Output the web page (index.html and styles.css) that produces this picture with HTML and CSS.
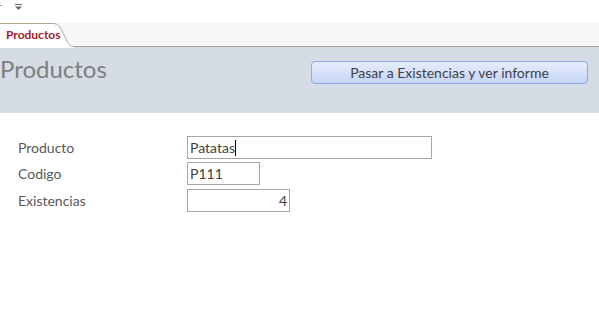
FILE: index.html
```html
<!DOCTYPE html>
<html lang="es">
<head>
    <meta charset="UTF-8">
    <title>Productos</title>
    <link rel="stylesheet" href="styles.css">
</head>
<body>
    <div class="toolbar">
        <span class="qa-mark"></span>
        <svg class="qa-menu" width="7" height="6" viewBox="0 0 7 6">
            <rect x="0" y="0" width="7" height="1" fill="#6b6b6b"/>
            <path d="M0 2.5 H7 L3.5 6 Z" fill="#6b6b6b"/>
        </svg>
    </div>

    <div class="tab-strip">
        <div class="tab">
            <svg class="tab-shape" width="74" height="25" viewBox="0 0 74 25">
                <path d="M0 0.5 H54 Q58 0.5 60 4 L68 20 Q70 23.5 74 23.5 V25 H0 Z" fill="white"/>
                <path d="M0 0.5 H54 Q58 0.5 60 4 L68 20 Q70 23.5 74 23.5" fill="none" stroke="#b3a78f" stroke-width="1"/>
            </svg>
            <span class="tab-label">Productos</span>
        </div>
    </div>

    <div class="form-header">
        <h1 class="form-title">Productos</h1>
        <button type="button" class="btn">Pasar a Existencias y ver informe</button>
    </div>

    <div class="form-detail">
        <div class="row">
            <label class="field-label">Producto</label>
            <div class="field field-wide">Patatas<span class="caret"></span></div>
        </div>
        <div class="row">
            <label class="field-label">Codigo</label>
            <div class="field field-short">P111</div>
        </div>
        <div class="row">
            <label class="field-label">Existencias</label>
            <div class="field field-num">4</div>
        </div>
    </div>
</body>
</html>
```

FILE: styles.css
```css
* {
    margin: 0;
    padding: 0;
    box-sizing: border-box;
}

body {
    font-family: Lato, "Open Sans", sans-serif;
    background-color: white;
    width: 599px;
    height: 329px;
    overflow: hidden;
}

.toolbar {
    height: 23px;
    position: relative;
}

.qa-mark {
    position: absolute;
    left: 0;
    top: 5px;
    width: 2px;
    height: 1px;
    background-color: #9a9a9a;
}

.qa-menu {
    position: absolute;
    left: 15px;
    top: 4px;
}

.tab-strip {
    height: 24px;
    background-color: #f7f7f7;
    border-bottom: 1px solid #a0a0a0;
    display: flex;
    align-items: flex-end;
}

.tab {
    position: relative;
    height: 24px;
    width: 74px;
    margin-bottom: -1px;
}

.tab-shape {
    position: absolute;
    left: 0;
    top: 0;
}

.tab-label {
    position: relative;
    display: block;
    padding: 4px 0 0 6px;
    color: #a0212a;
    font-weight: 700;
    font-size: 12px;
}

.form-header {
    height: 66px;
    background-color: #d5dce6;
    display: flex;
    align-items: flex-start;
    justify-content: space-between;
    padding: 6px 11px 0 0;
}

.form-title {
    font-weight: 400;
    font-size: 24px;
    color: #7f7f7f;
    line-height: 32px;
}

.btn {
    margin-top: 8px;
    width: 277px;
    height: 23px;
    border: 1px solid #8ea9e6;
    border-radius: 4px;
    background: linear-gradient(#e6edfc, #c4d5f7);
    color: #3f3f3f;
    font-family: Lato, "Open Sans", sans-serif;
    font-size: 14px;
}

.form-detail {
    padding: 21px 0 0 18px;
    display: flex;
    flex-direction: column;
}

.row {
    display: flex;
    align-items: center;
    height: 26.5px;
}

.field-label {
    width: 169px;
    color: #595959;
    font-size: 14px;
}

.field {
    height: 23px;
    border: 1px solid #a6a6a6;
    padding: 1px 2px 0;
    color: #3f3f3f;
    font-size: 14px;
    line-height: 19px;
}

.field-wide {
    width: 245px;
}

.field-short {
    width: 73px;
}

.field-num {
    width: 103px;
    text-align: right;
}

.caret {
    display: inline-block;
    width: 1px;
    height: 16px;
    vertical-align: -3px;
    background-color: black;
}
```
